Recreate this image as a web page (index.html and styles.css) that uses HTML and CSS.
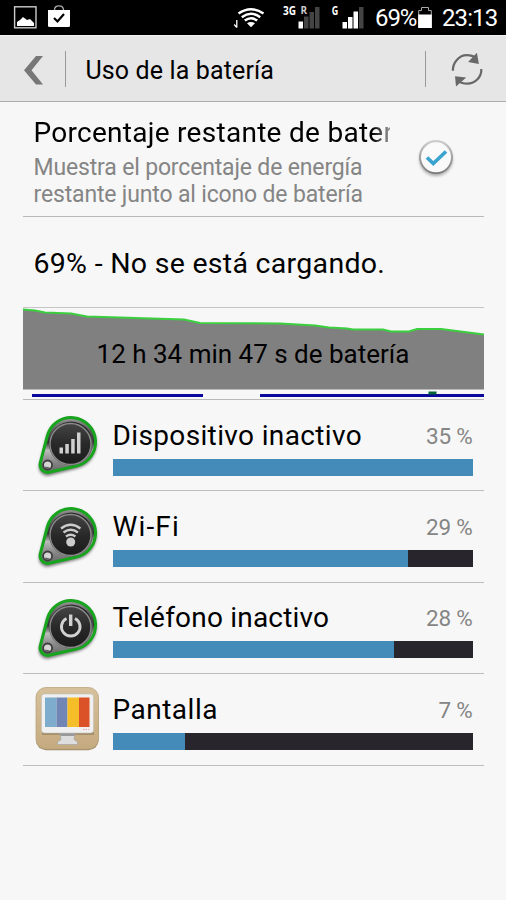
FILE: index.html
```html
<!DOCTYPE html>
<html lang="es">
<head>
<meta charset="utf-8">
<title>Uso de la batería</title>
<link rel="stylesheet" href="styles.css">
</head>
<body>
<svg class="defs" width="0" height="0" aria-hidden="true">
  <defs>
    <linearGradient id="disc" x1="0" y1="0" x2="0" y2="1"><stop offset="0" stop-color="#444"/><stop offset=".5" stop-color="#292929"/><stop offset="1" stop-color="#1b1b1b"/></linearGradient>
    <linearGradient id="rim" x1="0" y1="0" x2="1" y2="1"><stop offset="0" stop-color="#444"/><stop offset=".5" stop-color="#222"/><stop offset="1" stop-color="#888"/></linearGradient>
    <linearGradient id="plate" x1="0" y1="0" x2="0" y2="1"><stop offset="0" stop-color="#999"/><stop offset=".2" stop-color="#666"/><stop offset=".45" stop-color="#2c2c2c"/><stop offset=".6" stop-color="#bbb"/><stop offset=".8" stop-color="#888"/><stop offset="1" stop-color="#666"/></linearGradient>
    <linearGradient id="wood" x1="0" y1="0" x2="0" y2="1"><stop offset="0" stop-color="#d6c19c"/><stop offset="1" stop-color="#c5aa7e"/></linearGradient>
    <linearGradient id="knob" x1="0" y1="0" x2="0" y2="1"><stop offset="0" stop-color="#cfcfcf"/><stop offset="1" stop-color="#777"/></linearGradient>
    <filter id="soft" x="-20%" y="-20%" width="140%" height="150%"><feGaussianBlur stdDeviation="1.6"/></filter>
    <symbol id="badge" viewBox="0 0 68 68">
      <path d="M6.2 51.6 13.3 24A24.5 24.5 0 1 1 42.2 54L15.1 60.8A7.5 7.5 0 0 1 6.2 51.6Z" fill="#555" stroke="#555" stroke-width="2" opacity=".8" transform="translate(0 1.8)" filter="url(#soft)"/>
      <path d="M6.2 51.2 13.3 24A24.5 24.5 0 1 1 42.2 54L15.1 60.2A7.5 7.5 0 0 1 6.2 51.2Z" fill="url(#plate)" stroke="#16a51d" stroke-width="3"/>
      <circle cx="37" cy="31.5" r="22" fill="url(#rim)"/>
      <circle cx="36.500" cy="32" r="20.500" fill="url(#disc)" stroke="#8a8a8a" stroke-width="1.400"/>
      <circle cx="13.600" cy="53" r="4.500" fill="#d5d5d5" stroke="#3d3d3d" stroke-width="1.800"/>
      <path d="M10.500 54.500a3.400 3.400 0 0 0 5.500 1z" fill="#555"/>
    </symbol>
  </defs>
</svg>
<div class="status">
  <svg class="status-left" width="80" height="35" viewBox="0 0 80 35">
    <rect x="14.6" y="6.8" width="21.4" height="21" fill="none" stroke="#ccc" stroke-width="1.4"/>
    <path d="M17 26v-4l3-2 3-3 4 3 3-1 4 4v3z" fill="#fff"/>
    <path d="M48 10h22v15.500q0 1.500-1.500 1.500H49.500Q48 27 48 25.500z" fill="#fff"/>
    <path d="M54.500 10q0-4.200 4.500-4.200T63.500 10" fill="none" stroke="#aaa" stroke-width="1.300"/>
    <path d="m54 18 3.500 3.500 6.500-7.500" fill="none" stroke="#000" stroke-width="2.200"/>
  </svg>
  <svg class="status-net" width="135" height="35" viewBox="230 0 135 35">
    <path d="M236.800 20v7.500M234.200 24.500l2.600 3" fill="none" stroke="#fff" stroke-width="1.300"/>
    <g fill="none" stroke="#fff" stroke-width="2.500"><path d="M238.500 13.600Q251 4.800 263.500 13.600"/><path d="M241.800 17.200Q251 10.400 260.200 17.200"/><path d="M244.800 20.600Q251 15.800 257.200 20.600"/></g>
    <path d="M247 23.300Q251 20.600 255 23.300L251 27.300z" fill="#fff"/>
    <text class="net-label" x="283" y="15.300" textLength="13" lengthAdjust="spacingAndGlyphs">3G</text><text class="net-label r-label" x="300.500" y="13.800">R</text>
    <path d="M298.500 21.500h4.500v7h-4.500z" fill="#fff"/><path d="M304 16.500h4.500v12H304zM309.500 12h4.500v16.500h-4.500zM315 7h4.500v21.500H315z" fill="#444"/>
    <text class="net-label" x="331.800" y="15.300" textLength="6.500" lengthAdjust="spacingAndGlyphs">G</text>
    <path d="M342.500 22h4.500v6.500h-4.500zM348 17h4.500v11.500H348zM353.500 11.500h4.500v17h-4.500z" fill="#fff"/><path d="M359 7h4.500v21.500H359z" fill="#444"/>
  </svg>
  <span class="status-pct">69%</span>
  <svg class="status-bat" width="16" height="35" viewBox="0 0 16 35"><path d="M4.500 7.500h7v3h2.800v17H1.700v-17h2.800z" fill="#000" stroke="#aaa" stroke-width="1"/><path d="M1.200 14.500h13.600V28H1.200z" fill="#fff"/></svg>
  <span class="status-time">23:13</span>
</div>
<header class="bar">
  <svg class="back" width="65" height="66" viewBox="0 0 65 66"><path d="M36 20h7L31.500 34.300 43 48.500h-7L24 34.300z" fill="#777"/></svg>
  <span class="sep"></span>
  <h1>Uso de la batería</h1>
  <span class="sep"></span>
  <svg class="refresh" width="80" height="66" viewBox="426 35 80 66"><g fill="none" stroke="#686868" stroke-width="2.200"><path d="M452.900 69.800c-.3-8 6-15.600 14-15.600 4 0 7 1.200 9 3"/><path d="M481.300 68c.5 7.800-6 14.700-14 14.700-3.800 0-6.800-1-9-3"/></g><path d="M476.900 51.700l2 11.200-10.800-1.800zM455 75.200l11.200 1.200L456 85.600z" fill="#686868"/></svg>
</header>
<main>
  <section class="setting">
    <div class="setting-text">
      <h2>Porcentaje restante de batería</h2>
      <p>Muestra el porcentaje de energía<br>restante junto al icono de batería</p>
    </div>
    <svg class="check" width="48" height="48" viewBox="0 0 48 48"><circle cx="24" cy="26.500" r="16.500" fill="#777" opacity=".6" filter="url(#soft)"/><circle cx="24" cy="24" r="17" fill="url(#knob)"/><circle cx="24" cy="24.300" r="15" fill="#fafafa"/><path d="m15 24.500 6.300 6L34 18.500" fill="none" stroke="#3ba3cf" stroke-width="3.700"/></svg>
  </section>
  <section class="state">69% - No se está cargando.</section>
  <section class="chart">
    <svg width="461" height="91" viewBox="0 0 461 91">
      <path d="M0 1.500 12 2.500 22 4.500l26 1 16 3 97 3 16 3.500 80 .500 35 2 14 2 18 1 6 1h30l8 2h18l8-2.500h24L461 26.500v55H0z" fill="#808080"/>
      <path d="M0 1.500 12 2.500 22 4.500l26 1 16 3 97 3 16 3.500 80 .500 35 2 14 2 18 1 6 1h30l8 2h18l8-2.500h24L461 26.500" fill="none" stroke="#3bcf3f" stroke-width="2"/>
      <path d="M9 87.500h171M237 87.500h224" stroke="#0b079b" stroke-width="3"/><path d="M405.500 83.500h8v3h-8z" fill="#006535"/>
    </svg>
    <span class="chart-label">12 h 34 min 47 s de batería</span>
  </section>
  <section class="app">
    <svg class="icon" width="68" height="68" viewBox="0 0 68 68"><use href="#badge"/><path d="M25.500 35.500h3.500v6h-3.500zM31.300 32h3.500v9.500h-3.500zM37.200 27h3.500v14.500h-3.500zM43 20.500h3.500v21H43z" fill="#d0d0d0"/></svg>
    <div class="info"><div class="line"><span class="device">Dispositivo inactivo</span><b>35 %</b></div><div class="track"><i style="width:100%"></i></div></div>
  </section>
  <section class="app">
    <svg class="icon" width="68" height="68" viewBox="0 0 68 68"><use href="#badge"/><g fill="none" stroke="#ccc" stroke-width="2.400"><path d="M27 25.500q9.700-7.500 19.400 0M29.500 29.500q7.200-5.500 14.400 0M32 33.500q4.700-3.500 9.400 0"/></g><circle cx="36.700" cy="39" r="4.500" fill="#ccc"/></svg>
    <div class="info"><div class="line"><span class="wifi">Wi-Fi</span><b>29 %</b></div><div class="track"><i style="width:82%"></i></div></div>
  </section>
  <section class="app">
    <svg class="icon" width="68" height="68" viewBox="0 0 68 68"><use href="#badge"/><path d="M32.500 23.500a9.300 9.300 0 1 0 8.500 0" fill="none" stroke="#d0d0d0" stroke-width="2.900"/><path d="M36.700 19.500V31" stroke="#d0d0d0" stroke-width="3.400"/></svg>
    <div class="info"><div class="line"><span class="phone">Teléfono inactivo</span><b>28 %</b></div><div class="track"><i style="width:78.200%"></i></div></div>
  </section>
  <section class="app">
    <svg class="icon" width="68" height="68" viewBox="0 0 68 68"><rect x="2" y="3.300" width="62.500" height="61" rx="10" fill="#9c8765"/><rect x="2" y="1.500" width="62.500" height="61.500" rx="10" fill="url(#wood)" stroke="#b9a47e" stroke-width=".8"/>
      <path d="M8 46h52v3H8z" fill="#8f7b5b" opacity=".6"/><rect x="7.500" y="8" width="52" height="39" rx="3" fill="#f0f0f0" stroke="#bbb" stroke-width=".5"/>
      <path d="M11 11.500h11.500v29.500H11z" fill="#7daccd"/><path d="M22.500 11.500h11V41h-11z" fill="#7186b5"/><path d="M33.500 11.500H45V41H33.500z" fill="#f5bd27"/><path d="M45 11.500h10.500V41H45z" fill="#dc5228"/>
      <path d="M49 43.500h6" stroke="#d99" stroke-width=".8" stroke-dasharray="1.500 1"/>
      <path d="M26 47.500h15l-1 6 3.500 2.500v2.500h-20V56l3.500-2.500z" fill="#ddd" stroke="#a5a5a5" stroke-width=".7"/><path d="M26 47.500h15l-.5 2.500h-14z" fill="#999"/></svg>
    <div class="info"><div class="line"><span class="screen">Pantalla</span><b>7 %</b></div><div class="track"><i style="width:20%"></i></div></div>
  </section>
</main>
</body>
</html>
```
FILE: styles.css
```css
* { box-sizing: border-box; }
body { margin: 0; height: 900px; overflow: hidden; background: #f7f7f7; color: #000; font-family: Roboto, sans-serif; }
svg { display: block; flex: none; }
.defs { position: absolute; }
.status { height: 35px; background: #000; color: #fff; display: flex; font-size: 24px; line-height: 36px; white-space: nowrap; }
.status-net { margin-left: 150px; }
.net-label { fill: #fff; font: bold 11.500px "Open Sans", sans-serif; }
.r-label { font-size: 10px; fill: #ccc; }
.status-pct { width: 41px; margin-left: 10px; letter-spacing: -1.100px; }
.status-bat { margin-left: 1px; }
.status-time { margin-left: 9px; letter-spacing: -.9px; }
.bar { height: 67px; display: flex; align-items: center; background: #e6e6e6; border-top: 1px solid #f2f2f2; border-bottom: 1.500px solid #adadad; }
.sep { width: 1px; height: 36px; background: #999; flex: none; }
h1 { width: 359px; margin: 0; padding: 4px 0 0 19.500px; font-size: 25px; line-height: 32px; font-weight: 400; letter-spacing: .13px; white-space: nowrap; }
main { margin: 0 22.500px; }
.setting { height: 115px; display: flex; border-bottom: 1px solid #b9b9b9; }
.setting-text { width: 367px; padding: 13px 0 0 11px; white-space: nowrap; }
h2 { margin: 0; overflow: hidden; font-size: 28px; line-height: 36px; font-weight: 400; letter-spacing: .28px; -webkit-mask-image: linear-gradient(90deg, #000 95%, transparent 103%); mask-image: linear-gradient(90deg, #000 95%, transparent 103%); }
p { margin: 3px 0 0; font-size: 23px; line-height: 27px; color: #858585; letter-spacing: -.16px; }
.check { margin: 31px 0 0 22px; }
.state { height: 91px; padding: 2px 0 0 11px; font-size: 28.500px; line-height: 90px; letter-spacing: .29px; border-bottom: 1.500px solid #c5c5c5; white-space: nowrap; }
.chart { height: 92px; display: grid; border-bottom: 1px solid #b9b9b9; }
.chart > * { grid-area: 1 / 1; }
.chart-label { align-self: start; justify-self: center; padding-top: 28px; font-size: 26px; line-height: 36px; white-space: nowrap; }
.app { height: 91.400px; display: flex; border-bottom: 1.500px solid #bdbdbd; }
.icon { margin: 12px 0 0 11px; }
.info { width: 360px; margin-left: 11px; padding-top: 17.500px; }
.line { height: 36px; display: flex; justify-content: space-between; font-size: 28px; line-height: 36px; white-space: nowrap; }
.device { letter-spacing: .36px; }
.wifi { letter-spacing: 1.150px; }
.phone { letter-spacing: .200px; }
.screen { letter-spacing: .5px; }
b { font-size: 22.500px; font-weight: 400; color: #858585; letter-spacing: -.2px; }
.track { height: 17px; margin-top: 5px; background: #29252d; }
.track i { display: block; height: 100%; background: #458bba; }
```
